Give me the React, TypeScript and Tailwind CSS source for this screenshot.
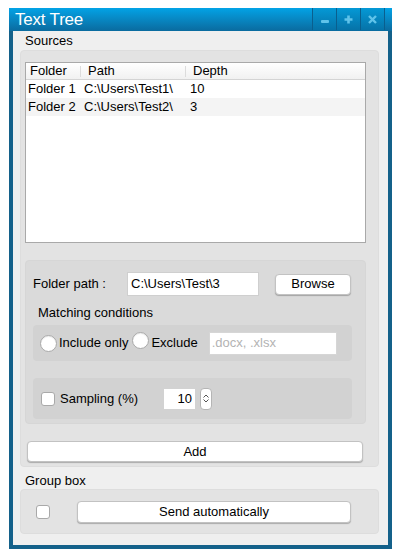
import React from "react";

const font = { fontFamily: '"Liberation Sans", Arial, sans-serif' };

const rows = [
  { folder: "Folder 1", path: "C:\\Users\\Test1\\", depth: "10" },
  { folder: "Folder 2", path: "C:\\Users\\Test2\\", depth: "3" },
];

function TitleButton({ children }: { children: React.ReactNode }) {
  return (
    <div className="w-[24px] h-[22px] flex items-center justify-center border-l border-[#0a5f8e] bg-gradient-to-b from-[#0499d6] to-[#0673a8]">
      {children}
    </div>
  );
}

function Radio() {
  return <span className="inline-block w-[17px] h-[17px] rounded-full bg-white border border-[#a9a9a9] shadow-[inset_0_1px_1px_rgba(0,0,0,0.08)]" />;
}

function Checkbox() {
  return <span className="inline-block w-[14px] h-[14px] rounded-[3px] bg-white border border-[#a9a9a9]" />;
}

function Button({ children, className = "" }: { children: React.ReactNode; className?: string }) {
  return (
    <div className={`flex items-center justify-center bg-white rounded-[4px] border border-[#c2c2c2] shadow-[0_1px_1px_rgba(0,0,0,0.25)] text-[13px] text-black ${className}`}>
      {children}
    </div>
  );
}

export default function App() {
  return (
    <div className="w-[405px] h-[558px] bg-white pt-[8px] pl-[9px]" style={font}>
      <div className="w-[383px] h-[541px] bg-[#14618a] flex flex-col">
        {/* title bar */}
        <div className="h-[23px] flex items-start bg-gradient-to-b from-[#02a3e6] to-[#0a6b9f]">
          <div className="pl-[6px] pt-[1px] text-white text-[17px] leading-[21px] tracking-[-0.2px]">Text Tree</div>
          <div className="ml-auto flex mr-[7px] border-r border-[#0a5f8e]">
            <TitleButton>
              <span className="block w-[8px] h-[3px] mt-[5px] rounded-[1px] bg-[#5fc3ea]" />
            </TitleButton>
            <TitleButton>
              <svg width="9" height="9" viewBox="0 0 9 9">
                <path d="M4.5 0.5v8M0.5 4.5h8" stroke="#5fc3ea" strokeWidth="2.6" />
              </svg>
            </TitleButton>
            <TitleButton>
              <svg width="9" height="9" viewBox="0 0 9 9">
                <path d="M1 1l7 7M8 1l-7 7" stroke="#5fc3ea" strokeWidth="2.4" />
              </svg>
            </TitleButton>
          </div>
        </div>

        {/* content */}
        <div className="flex-1 mx-[4px] mb-[4px] bg-[#efefef] flex flex-col">
          <div className="pl-[12px] h-[18px] mt-[1px] text-[13px] leading-[18px] text-black">Sources</div>

          <div className="ml-[7px] w-[359px] h-[417px] bg-[#e3e3e3] rounded-[4px] border border-[#dddddd] pt-[11px] px-[4px] flex flex-col">
            {/* table */}
            <div className="w-[341px] h-[181px] bg-white border border-[#a9a9a9] text-[13px] text-black">
              <div className="h-[17px] flex items-center bg-gradient-to-b from-white to-[#f1f1f1] border-b border-[#d4d4d4] leading-[16px]">
                <div className="w-[55px] pl-[4px] border-r border-[#dcdcdc] h-[11px] flex items-center">Folder</div>
                <div className="w-[105px] pl-[7px] border-r border-[#dcdcdc] h-[11px] flex items-center">Path</div>
                <div className="pl-[7px]">Depth</div>
              </div>
              {rows.map((r, i) => (
                <div key={r.folder} className={`h-[18px] flex items-center ${i % 2 ? "bg-[#f4f4f4]" : "bg-white"}`}>
                  <div className="w-[58px] pl-[2px]">{r.folder}</div>
                  <div className="w-[106px]">{r.path}</div>
                  <div>{r.depth}</div>
                </div>
              ))}
            </div>

            {/* folder path box */}
            <div className="mt-[17px] w-[341px] h-[164px] bg-[#dadada] rounded-[4px] border border-[#d6d6d6] px-[7px] pt-[11px] flex flex-col">
              <div className="flex items-center h-[24px]">
                <div className="w-[94px] text-[13px] text-black">Folder path :</div>
                <div className="w-[132px] h-[24px] bg-white border border-[#cfcfcf] flex items-center pl-[3px] text-[13px] text-black">C:\Users\Test\3</div>
                <Button className="ml-[16px] w-[76px] h-[21px]">Browse</Button>
              </div>
              <div className="mt-[8px] pl-[5px] h-[17px] text-[13px] leading-[17px] text-black">Matching conditions</div>
              <div className="mt-[4px] w-[319px] h-[36px] bg-[#d2d2d2] rounded-[4px] flex items-center pl-[7px] text-[13px] text-black">
                <Radio />
                <span className="ml-[2px]">Include only</span>
                <span className="ml-[4px]"><Radio /></span>
                <span className="ml-[2px]">Exclude</span>
                <div className="ml-[11px] w-[128px] h-[23px] bg-white border border-[#d6d6d6] flex items-center pl-[2px] text-[#b3b3b3]">.docx, .xlsx</div>
              </div>
              <div className="mt-[17px] w-[319px] h-[41px] bg-[#d2d2d2] rounded-[4px] flex items-center pl-[8px] text-[13px] text-black">
                <Checkbox />
                <span className="ml-[5px]">Sampling (%)</span>
                <div className="ml-[26px] w-[31px] h-[20px] bg-white flex items-center justify-end pr-[3px]">10</div>
                <div className="ml-[5px] w-[12px] h-[22px] bg-white rounded-[4px] border border-[#b5b5b5] flex flex-col items-center justify-center gap-[1px]">
                  <svg width="6" height="4" viewBox="0 0 6 4"><path d="M0.5 3.5L3 1l2.5 2.5" fill="none" stroke="#555" strokeWidth="1" /></svg>
                  <svg width="6" height="4" viewBox="0 0 6 4"><path d="M0.5 0.5L3 3l2.5-2.5" fill="none" stroke="#555" strokeWidth="1" /></svg>
                </div>
              </div>
            </div>

            <Button className="mt-[17px] ml-[2px] w-[336px] h-[21px]">Add</Button>
          </div>

          <div className="pl-[12px] mt-[6px] h-[16px] text-[13px] leading-[16px] text-black">Group box</div>
          <div className="ml-[7px] w-[359px] h-[45px] bg-[#e3e3e3] rounded-[4px] border border-[#dddddd] flex items-center pl-[15px]">
            <Checkbox />
            <Button className="ml-[27px] w-[274px] h-[22px]">Send automatically</Button>
          </div>
        </div>
      </div>
    </div>
  );
}
